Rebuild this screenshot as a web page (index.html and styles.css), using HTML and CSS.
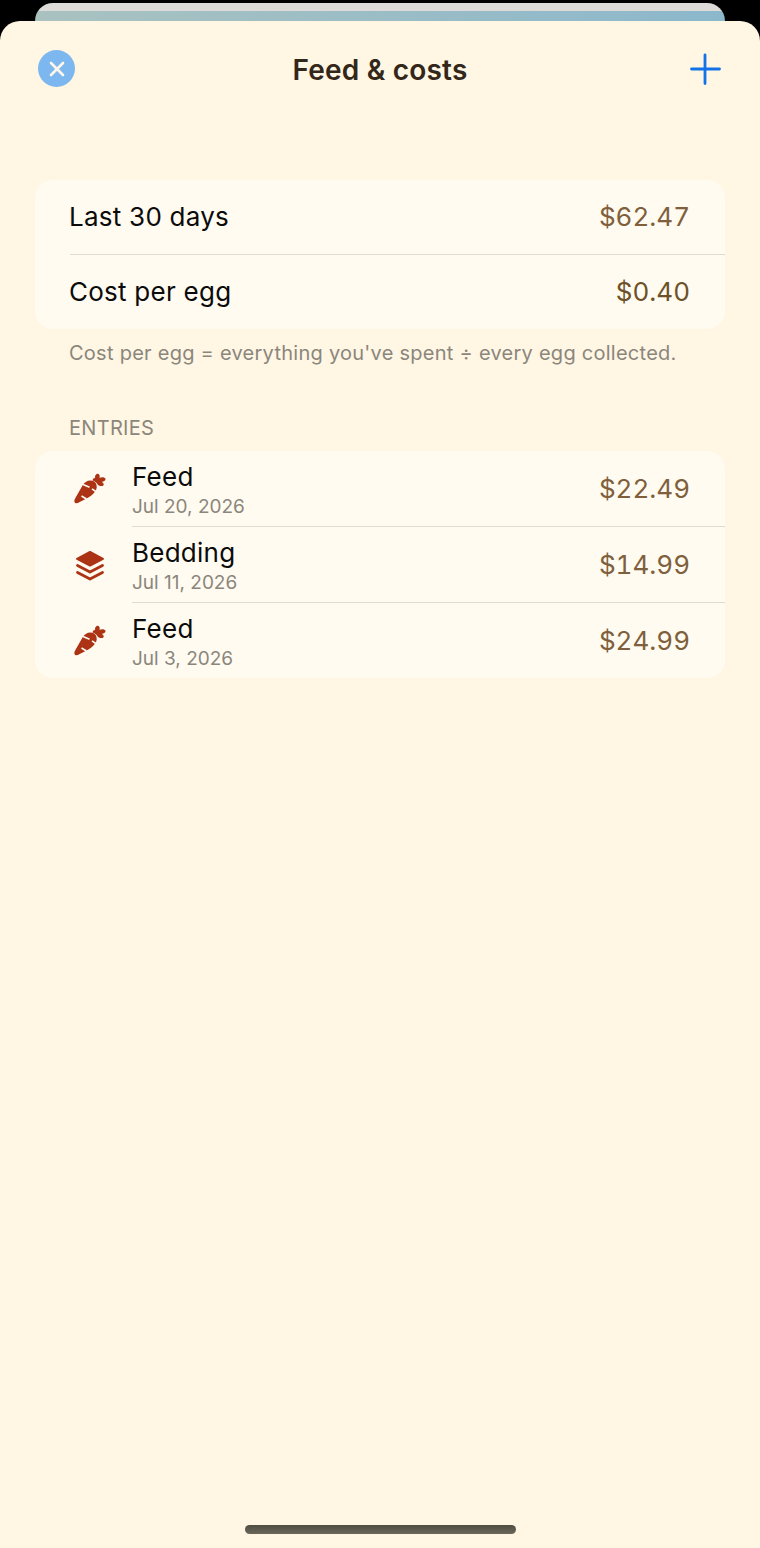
FILE: index.html
```html
<!DOCTYPE html>
<html>
	<head>
		<title>Feed &amp; costs</title>
		<link rel="stylesheet" href="styles.css">
	</head>
	<body>
		<div class="peek"></div>
		<div class="sheet">
			<div class="header">
				<div class="close">
					<svg width="18" height="18" viewBox="0 0 18 18"><path d="M3 3L15 15M15 3L3 15" stroke="#fff8ea" stroke-width="2.6" stroke-linecap="round" fill="none"/></svg>
				</div>
				<div class="title">Feed &amp; costs</div>
				<svg class="plus" width="32" height="32" viewBox="0 0 32 32"><path d="M16 2V30.5M2.5 16H30.5" stroke="#1273e8" stroke-width="2.8" stroke-linecap="round" fill="none"/></svg>
			</div>

			<div class="card">
				<div class="row summary">
					<span class="label">Last 30 days</span>
					<span class="amount">$62.47</span>
				</div>
				<div class="divider"></div>
				<div class="row summary">
					<span class="label">Cost per egg</span>
					<span class="amount dark">$0.40</span>
				</div>
			</div>
			<p class="note">Cost per egg = everything you've spent ÷ every egg collected.</p>

			<h4 class="section">ENTRIES</h4>
			<div class="card">
				<div class="row entry">
					<svg class="icon" width="34" height="34" viewBox="0 0 34 34"><use href="#carrot"/></svg>
					<div class="entry-text">
						<div class="label">Feed</div>
						<div class="date">Jul 20, 2026</div>
					</div>
					<span class="amount">$22.49</span>
				</div>
				<div class="divider inset"></div>
				<div class="row entry">
					<svg class="icon" width="34" height="34" viewBox="0 0 34 34"><use href="#stack"/></svg>
					<div class="entry-text">
						<div class="label">Bedding</div>
						<div class="date">Jul 11, 2026</div>
					</div>
					<span class="amount">$14.99</span>
				</div>
				<div class="divider inset"></div>
				<div class="row entry">
					<svg class="icon" width="34" height="34" viewBox="0 0 34 34"><use href="#carrot"/></svg>
					<div class="entry-text">
						<div class="label">Feed</div>
						<div class="date">Jul 3, 2026</div>
					</div>
					<span class="amount">$24.99</span>
				</div>
			</div>

			<div class="spacer"></div>
			<div class="home-bar"></div>
		</div>

		<svg class="defs" width="0" height="0">
			<defs>
				<g id="carrot">
					<path fill="#ad3315" d="M2.2 31C0.8 29.8 1.2 28 2.4 26L9.5 13.5C11 10.5 14 8.5 17.5 8.5C20 8.5 22 9.5 23 11.5C24.2 14 24 17 22.2 19.5C20 22.5 16.5 25 12.5 27C8 29.3 3.8 32.3 2.2 31Z"/>
					<path fill="#ad3315" d="M19.5 8.5C19.8 6.5 21 5.8 22.2 6C21.5 4.2 23 1.5 25 1.8C26.5 2 27 4 26.6 6C28.2 5 31 5 32.4 6.5C33 8 31 9.8 28.6 10C30.4 10.6 31.2 12.2 30.4 13.4C29 14.6 26 13.8 24.6 12.4C23.5 10.6 21.5 9 19.5 8.5Z"/>
					<path d="M10 12.5L16.5 15.2M19 16.8L23.5 20M8.5 24L13.5 27" stroke="#fffbf0" stroke-width="1.6" fill="none"/>
				</g>
				<g id="stack" fill="#ad3315">
					<path d="M17 4L30 10.8L17 17.6L4 10.8Z" stroke="#ad3315" stroke-width="2" stroke-linejoin="round"/>
					<path d="M4.5 17.5L17 24L29.5 17.5" fill="none" stroke="#ad3315" stroke-width="2.8" stroke-linecap="round" stroke-linejoin="round"/>
					<path d="M4.5 24.5L17 31L29.5 24.5" fill="none" stroke="#ad3315" stroke-width="2.8" stroke-linecap="round" stroke-linejoin="round"/>
				</g>
			</defs>
		</svg>
	</body>
</html>
```

FILE: styles.css
```css
html, body {
  margin: 0;
  height: 100%;
}

body {
  background-color: #000;
  font-family: Inter, "Liberation Sans", sans-serif;
  display: flex;
  flex-direction: column;
  height: 1548px;
  overflow: hidden;
}

.defs {
  position: absolute;
}

.peek {
  height: 18px;
  margin: 3px 35px 0;
  border-radius: 18px 18px 0 0;
  background-image: linear-gradient(#dddbd8 0 8px, transparent 8px), linear-gradient(90deg, #a9c2c0, #8cb8cc);
}

.sheet {
  flex: 1;
  display: flex;
  flex-direction: column;
  background-color: #fff6e4;
  border-radius: 20px 20px 0 0;
  padding: 0 35px;
}

.header {
  height: 96px;
  margin-bottom: 63px;
  display: flex;
  align-items: center;
  justify-content: space-between;
  position: relative;
}

.close {
  width: 37px;
  height: 37px;
  margin-left: 3px;
  margin-bottom: 1px;
  border-radius: 50%;
  background-color: #7db7f0;
  display: flex;
  align-items: center;
  justify-content: center;
}

.plus {
  margin-right: 4px;
}

.title {
  position: absolute;
  left: 0;
  right: 0;
  padding-top: 2px;
  text-align: center;
  font-size: 28px;
  letter-spacing: 0.2px;
  font-weight: 600;
  color: #33271a;
  pointer-events: none;
}

.card {
  background-color: #fffbf0;
  border-radius: 18px;
}

.row {
  display: flex;
  align-items: center;
}

.summary {
  box-sizing: border-box;
  height: 74px;
  padding: 0 35px 1px 34px;
  justify-content: space-between;
}

.summary:first-child {
  padding-bottom: 2px;
}

.entry {
  height: 75px;
  padding-right: 35px;
}

.label {
  font-size: 26px;
  letter-spacing: 0.25px;
  color: #0b0b0b;
}

.amount {
  font-size: 26px;
  font-variant-numeric: tabular-nums;
  color: #80603c;
}

.amount.dark {
  color: #6d5128;
}

.divider {
  height: 1px;
  margin-left: 35px;
  background-color: #dedbd0;
}

.divider.inset {
  margin-left: 97px;
}

.note {
  margin: 12px 34px 0;
  font-size: 20px;
  letter-spacing: 0.26px;
  line-height: 24px;
  white-space: nowrap;
  color: #8b867c;
}

.section {
  margin: 51px 34px 11px;
  font-size: 20px;
  letter-spacing: 0.3px;
  line-height: 24px;
  font-weight: 400;
  color: #8b867c;
}

.icon {
  margin-left: 38px;
  margin-right: 25px;
  flex-shrink: 0;
}

.entry-text {
  flex: 1;
  padding-top: 3px;
}

.entry-text .label {
  line-height: 30px;
}

.date {
  margin-top: 3px;
  font-size: 19px;
  line-height: 24px;
  color: #8b867c;
}

.spacer {
  flex: 1;
}

.home-bar {
  width: 271px;
  height: 9px;
  margin: 0 auto 14px;
  border-radius: 5px;
  background-image: linear-gradient(#4f4d41, #6a675b);
}
```
